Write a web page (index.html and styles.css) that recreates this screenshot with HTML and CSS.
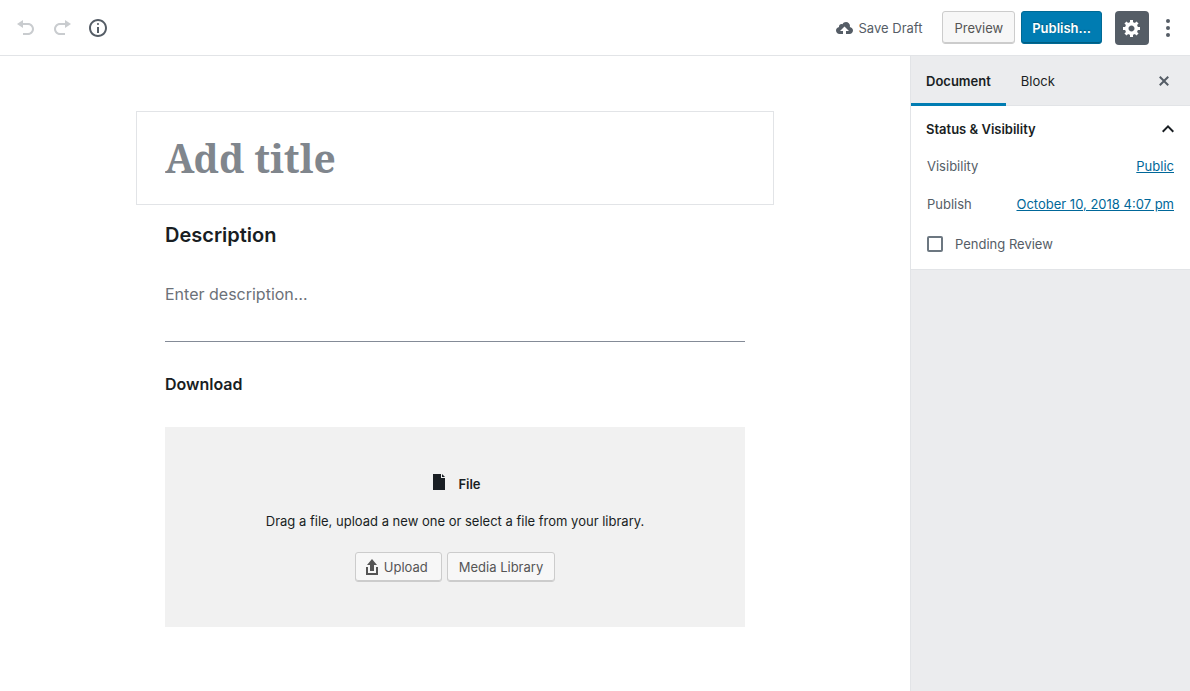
FILE: index.html
```html
<!DOCTYPE html>
<html lang="en">
<head>
<meta charset="utf-8">
<meta name="viewport" content="width=device-width, initial-scale=1">
<title>Add New Download</title>
<link rel="stylesheet" href="styles.css">
</head>
<body>
<header class="toolbar">
  <div class="toolbar-group history">
    <button class="icon-button" type="button" aria-label="Undo" disabled>
      <svg class="icon" viewBox="0 0 20 20"><path d="M12 5H7V2L1 6l6 4V7h5c2.2 0 4 1.8 4 4s-1.8 4-4 4H7v2h5c3.3 0 6-2.7 6-6s-2.7-6-6-6z"/></svg>
    </button>
    <button class="icon-button" type="button" aria-label="Redo" disabled>
      <svg class="icon" viewBox="0 0 20 20"><path d="M8 5h5V2l6 4-6 4V7H8c-2.2 0-4 1.8-4 4s1.8 4 4 4h5v2H8c-3.3 0-6-2.7-6-6s2.7-6 6-6z"/></svg>
    </button>
    <button class="icon-button" type="button" aria-label="Content structure">
      <svg class="icon" viewBox="0 0 20 20"><path d="M9 15h2V9H9v6zm1-10c-.5 0-1 .5-1 1s.5 1 1 1 1-.5 1-1-.5-1-1-1zm0-4c-5 0-9 4-9 9s4 9 9 9 9-4 9-9-4-9-9-9zm0 16c-3.9 0-7-3.1-7-7s3.1-7 7-7 7 3.1 7 7-3.1 7-7 7z"/></svg>
    </button>
  </div>
  <div class="toolbar-group actions">
    <button class="save-draft" type="button">
      <svg class="icon" viewBox="0 0 20 20"><path d="M14.8 9c.1-.3.2-.6.2-1 0-2.2-1.8-4-4-4-1.5 0-2.9.9-3.5 2.2-.3-.1-.7-.2-1-.2C5.1 6 4 7.1 4 8.5c0 .2 0 .4.1.5-1.8.3-3.1 1.7-3.1 3.500C1 14.4 2.6 16 4.5 16H8v-3H5l4.500-4.500L14 13h-3v3h3.500c1.900 0 3.500-1.600 3.500-3.500 0-1.800-1.400-3.300-3.200-3.500z"/></svg>
      Save Draft
    </button>
    <button class="button" type="button">Preview</button>
    <button class="button primary" type="button">Publish…</button>
    <button class="settings" type="button" aria-label="Settings" aria-pressed="true">
      <svg class="icon" viewBox="0 0 20 20"><path d="M18 12h-2.180c-.17.7-.44 1.350-.81 1.930l1.540 1.540-2.100 2.100-1.540-1.540c-.58.36-1.230.63-1.910.79V19H8v-2.180c-.68-.16-1.330-.43-1.910-.79l-1.540 1.540-2.120-2.120 1.540-1.540c-.36-.58-.63-1.230-.79-1.910H1V9.030h2.170c.16-.7.44-1.350.8-1.940L2.430 5.550l2.100-2.100 1.540 1.540c.58-.37 1.240-.64 1.930-.81V2h3v2.180c.68.16 1.330.43 1.910.79l1.540-1.540 2.120 2.120-1.540 1.540c.36.59.64 1.240.8 1.940H18V12zm-8.500 1.500c1.660 0 3-1.340 3-3s-1.340-3-3-3-3 1.340-3 3 1.340 3 3 3z"/></svg>
    </button>
    <button class="more" type="button" aria-label="More options">
      <svg class="icon" viewBox="0 0 20 20"><circle cx="10" cy="3" r="2"/><circle cx="10" cy="10" r="2"/><circle cx="10" cy="17" r="2"/></svg>
    </button>
  </div>
</header>
<div class="workspace">
  <main class="editor">
    <div class="title-block">
      <input class="title-input" type="text" placeholder="Add title" aria-label="Add title">
    </div>
    <div class="blocks">
      <h2 class="description-heading"><label for="description">Description</label></h2>
      <input class="description-input" id="description" type="text" placeholder="Enter description…">
      <hr class="separator">
      <h3 class="download-heading">Download</h3>
      <section class="placeholder">
        <div class="placeholder-label">
          <svg class="file-icon" viewBox="0 0 12 16"><path d="M0 0h8v4h4v12H0z"/><path d="M9 0l3 3H9z"/></svg>
          File
        </div>
        <p class="instructions">Drag a file, upload a new one or select a file from your library.</p>
        <div class="upload-actions">
          <button class="button small with-icon" type="button">
            <svg class="upload-icon" viewBox="0 0 20 20"><path d="M8 14V8H5l5-6 5 6h-3v6H8zm-2 2v-6H4v8h12v-8h-2v6H6z"/></svg>
            Upload
          </button>
          <button class="button small" type="button">Media Library</button>
        </div>
      </section>
    </div>
  </main>
  <aside class="sidebar">
    <div class="tabs">
      <button class="tab active" type="button">Document</button>
      <button class="tab" type="button">Block</button>
      <button class="close" type="button" aria-label="Close settings">
        <svg class="icon" viewBox="0 0 20 20"><path d="M14.950 6.460L11.410 10l3.540 3.540-1.410 1.410L10 11.420l-3.530 3.530-1.420-1.420L8.580 10 5.050 6.470l1.420-1.420L10 8.580l3.540-3.530z"/></svg>
      </button>
    </div>
    <section class="panel">
      <button class="panel-toggle" type="button" aria-expanded="true">
        Status &amp; Visibility
        <svg class="chevron" viewBox="0 0 12 8"><path d="M6 0L0 6l1.400 1.400L6 2.800l4.600 4.600L12 6z"/></svg>
      </button>
      <div class="panel-body">
        <div class="panel-row"><span>Visibility</span><a class="link" href="#visibility">Public</a></div>
        <div class="panel-row"><span>Publish</span><a class="link" href="#schedule">October 10, 2018 4:07 pm</a></div>
        <label class="check-row"><input class="checkbox" type="checkbox">Pending Review</label>
      </div>
    </section>
  </aside>
</div>
</body>
</html>
```
FILE: styles.css
```css
* { box-sizing: border-box; }

body {
  margin: 0;
  min-height: 100vh;
  display: flex;
  flex-direction: column;
  background: #fff;
  color: #191e23;
  font: 13px/20px Inter, "Liberation Sans", sans-serif;
}

button, input { font: inherit; color: inherit; }

button {
  margin: 0;
  padding: 0;
  border: 0;
  background: none;
  cursor: pointer;
}

h2, h3, p { margin: 0; }

.icon { display: block; width: 20px; height: 20px; fill: currentColor; }

.toolbar {
  display: flex;
  justify-content: space-between;
  align-items: center;
  height: 56px;
  padding: 0 12px 0 8px;
  border-bottom: 1px solid #e2e4e7;
}

.toolbar-group { display: flex; align-items: center; }

.icon-button {
  display: grid;
  place-items: center;
  width: 36px;
  height: 36px;
  color: #555d66;
}

.icon-button:disabled { color: #c9cccf; }

.save-draft {
  display: flex;
  align-items: center;
  gap: 4px;
  margin-right: 20px;
  color: #555d66;
}

.button {
  height: 33px;
  padding: 0 11px;
  border: 1px solid #ccc;
  border-radius: 3px;
  background: #f7f7f7;
  box-shadow: inset 0 -1px 0 #ccc;
  color: #555;
  white-space: nowrap;
}

.primary {
  margin-left: 6px;
  padding: 0 10px;
  border-color: #006a95;
  background: #007cb2;
  box-shadow: inset 0 -1px 0 #005d82;
  color: #fff;
  font-weight: 600;
  text-shadow: 0 -1px 1px #005d82;
}

.settings {
  display: grid;
  place-items: center;
  width: 34px;
  height: 34px;
  margin-left: 13px;
  border-radius: 4px;
  background: #555d66;
  color: #fff;
}

.more { margin-left: 9px; color: #555d66; }

.workspace { flex: 1; display: flex; }

.editor { flex: 1; min-width: 0; padding: 55px 29px 64px; }

.title-block {
  max-width: 638px;
  margin: 0 auto;
  padding: 16px 28px;
  border: 1px solid #e2e4e7;
}

.title-input {
  display: block;
  width: 100%;
  height: 60px;
  padding: 0;
  border: 0;
  outline: 0;
  font: bold 39px/60px "Noto Serif", "DejaVu Serif", serif;
}

.title-input::placeholder { color: #80868d; opacity: 1; }

.blocks { max-width: 580px; margin: 0 auto; padding-top: 16px; }

.description-heading { font-size: 20px; font-weight: 600; line-height: 28px; }

.description-input {
  display: block;
  width: 100%;
  height: 26px;
  margin-top: 32px;
  padding: 0;
  border: 0;
  outline: 0;
  font-size: 16px;
}

.description-input::placeholder { color: #6c7178; opacity: 1; }

.separator {
  height: 1px;
  margin: 34px 0 0;
  border: 0;
  background: #848b97;
}

.download-heading { margin-top: 28px; font-size: 16px; font-weight: 600; line-height: 28px; }

.placeholder {
  display: flex;
  flex-direction: column;
  align-items: center;
  justify-content: center;
  min-height: 200px;
  margin-top: 29px;
  padding: 18px 16px 16px;
  background: #f1f1f1;
  text-align: center;
}

.placeholder-label {
  display: flex;
  align-items: center;
  gap: 13px;
  padding-left: 4px;
  font-weight: 600;
}

.file-icon { width: 12px; height: 16px; margin-bottom: 4px; fill: #191e23; }

.instructions { margin-top: 17px; }

.upload-actions { display: flex; gap: 5px; margin-top: 21px; }

.small { height: 30px; }

.with-icon { display: flex; align-items: center; gap: 2px; padding: 0 13px 0 6px; }

.upload-icon { width: 20px; height: 20px; fill: currentColor; }

.sidebar {
  flex: 0 0 280px;
  border-left: 1px solid #e2e4e7;
  background: #ebecee;
}

.tabs {
  display: flex;
  height: 50px;
  padding-right: 16px;
  border-bottom: 1px solid #e2e4e7;
}

.tab {
  height: 50px;
  padding: 3px 15px 0;
  border-bottom: 3px solid transparent;
}

.active { border-bottom-color: #007cb2; font-weight: 600; }

.close { margin-left: auto; color: #555d66; }

.panel {
  border-bottom: 1px solid #e2e4e7;
  background: #fff;
  color: #555d66;
}

.panel-toggle {
  display: flex;
  justify-content: space-between;
  align-items: center;
  width: 100%;
  height: 46px;
  padding: 0 16px 0 15px;
  color: #191e23;
  font-weight: 600;
}

.chevron { width: 12px; height: 8px; fill: currentColor; }

.panel-body { padding: 4px 16px 13px; }

.panel-row {
  display: flex;
  justify-content: space-between;
  margin-bottom: 18px;
}

.link { color: #006799; }

.check-row { display: flex; align-items: center; gap: 12px; height: 24px; }

.checkbox {
  appearance: none;
  width: 16px;
  height: 16px;
  margin: 0;
  border: 2px solid #6c7781;
  border-radius: 2px;
}

.checkbox:checked { background: #6c7781; }
```
